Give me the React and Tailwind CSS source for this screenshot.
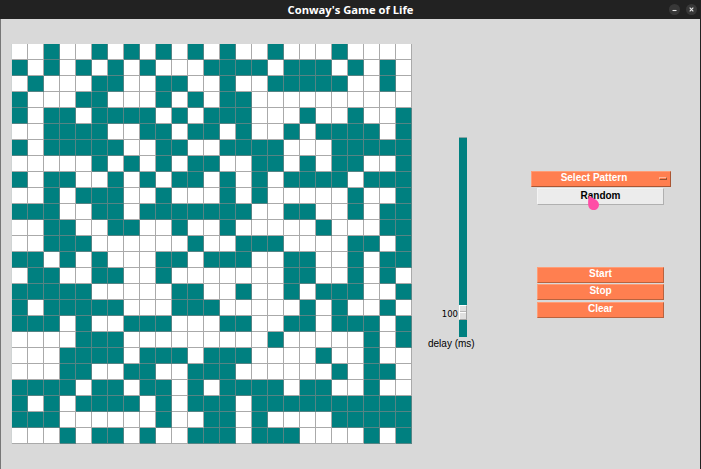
const ROWS = [
  "0010010101010100100010000",
  "1010101010001111011101010",
  "0100011001100100111110010",
  "1000110001010110000000000",
  "1011011110101110001001001",
  "0011110011011010010111101",
  "1011111001100111100011111",
  "0000010101011001101011001",
  "1011001010110101011110111",
  "0010111001000101000001001",
  "1110011011111110011001011",
  "0011001100100100000100011",
  "0011100000010011100001101",
  "1101010001101110011001011",
  "0110011001000000011001010",
  "1111100000110010010111001",
  "1011111000111000001010010",
  "1110100111000110011011101",
  "0000111000000000100000101",
  "0001111011101110000100100",
  "0001100110011100000010110",
  "1111011011010111101100100",
  "1010111101011101111111111",
  "1110000001001101000011111",
  "0001011010011101110000101",
];

function Board() {
  return (
    <div className="mt-[25px] ml-[10px] h-[400px] w-[401px] shrink-0 border-l border-[#d0d4d4]">
      {ROWS.map((row, y) => (
        <div key={y} className="flex h-4">
          {[...row].map((cell, x) => (
            <div
              key={x}
              className={
                "h-4 w-4 border-r border-b " +
                (cell === "1" ? "border-[#558484] bg-[#008080]" : "border-[#aaaaaa] bg-white")
              }
            />
          ))}
        </div>
      ))}
    </div>
  );
}

function DelaySlider() {
  return (
    <div className="mt-[118px] ml-[16px] w-[52px] shrink-0">
      <div className="flex h-[200px]">
        <div className="mt-[170px] w-[30px] text-right font-['DejaVu_Sans','Noto_Sans',sans-serif] text-[8.5px] leading-[14px]">
          100
        </div>
        <div className="ml-px h-[200px] w-[8px] border-t border-[#8ba5a5] bg-[#008080] pt-[167px]">
          <div className="flex h-[15px] flex-col border border-t-white border-l-white border-r-[#a5a5a5] border-b-[#a5a5a5] bg-[#e0e0e0]">
            <div className="h-[6px] border-b border-[#b8b8b8]" />
            <div className="h-px bg-white" />
          </div>
        </div>
      </div>
      <div className="-mt-px text-[10px] leading-[15px] whitespace-nowrap">delay (ms)</div>
    </div>
  );
}

function ActionButton({ children }) {
  return (
    <button className="block h-[16px] w-[127px] border border-t-[#ff9d76] border-l-[#ff9d76] border-r-[#b8633f] border-b-[#b8633f] bg-[#ff7f50] text-center text-[10px] leading-[11px] font-bold text-white">
      <span className="block h-[14px]">{children}</span>
    </button>
  );
}

function WindowButton({ children }) {
  return (
    <span className="flex h-[11px] w-[11px] items-center justify-center rounded-full bg-[#383838]">
      <svg width="11" height="11" viewBox="0 0 11 11" fill="none" stroke="#e8e8e8" strokeWidth="1.1">
        {children}
      </svg>
    </span>
  );
}

export default function App() {
  return (
    <div className="h-[469px] w-[701px] overflow-hidden bg-[#222222] font-['Liberation_Sans',Arial,sans-serif] text-black">
      <header className="grid h-[19px] grid-cols-[1fr_auto_1fr] items-center bg-[#222222]">
        <span />
        <h1 className="font-['Open_Sans','Noto_Sans',sans-serif] text-[11.2px] leading-[16px] font-bold text-white">
          Conway's Game of Life
        </h1>
        <div className="flex justify-end gap-[6px] pr-[4px]">
          <WindowButton>
            <path d="M3.5 6.5h4" />
          </WindowButton>
          <WindowButton>
            <path d="M3.7 3.7l3.6 3.6M7.3 3.7L3.7 7.3" />
          </WindowButton>
        </div>
      </header>
      <main className="flex h-[450px] w-[700px] border-l border-[#777777] bg-[#d9d9d9]">
        <Board />
        <DelaySlider />
        <div className="mt-[152px] ml-[51px] flex w-[140px] flex-col">
          <div className="flex h-[16px] w-[140px] items-start border border-t-[#ff9d76] border-l-[#ff9d76] border-r-[#a95634] border-b-[#a95634] bg-[#ff7f50] pr-[3px]">
            <span className="flex-1 pr-[3px] text-center text-[10px] leading-[12px] font-bold text-white">
              Select Pattern
            </span>
            <span className="mt-[5px] h-[3px] w-[8px] border border-t-[#ffb699] border-l-[#ffb699] border-r-[#99502f] border-b-[#99502f]" />
          </div>
          <div className="relative mt-[1px] ml-[6px] h-[17px] w-[127px] border border-t-[#f4f4f4] border-l-[#f4f4f4] border-r-[#b0b0b0] border-b-[#b0b0b0] bg-[#ececec] text-center text-[10px] leading-[14px] font-bold">
            Random
            <svg className="absolute top-[5px] left-[49px]" width="14" height="18" viewBox="0 0 14 18">
              <path
                d="M1.8 1.500C1.200 4.500 1 8 1.200 11c.3 3 2.600 5 5.500 5 3 0 5.300-2.300 5.300-5.300 0-2-1-3.500-2.700-4.800C7 4.200 4 3.200 1.800 1.500z"
                fill="#ff4da6"
              />
            </svg>
          </div>
          <div className="mt-[62px] ml-[6px] flex flex-col">
            <ActionButton>Start</ActionButton>
            <div className="mt-px mb-[2px]">
              <ActionButton>Stop</ActionButton>
            </div>
            <ActionButton>Clear</ActionButton>
          </div>
        </div>
      </main>
    </div>
  );
}
